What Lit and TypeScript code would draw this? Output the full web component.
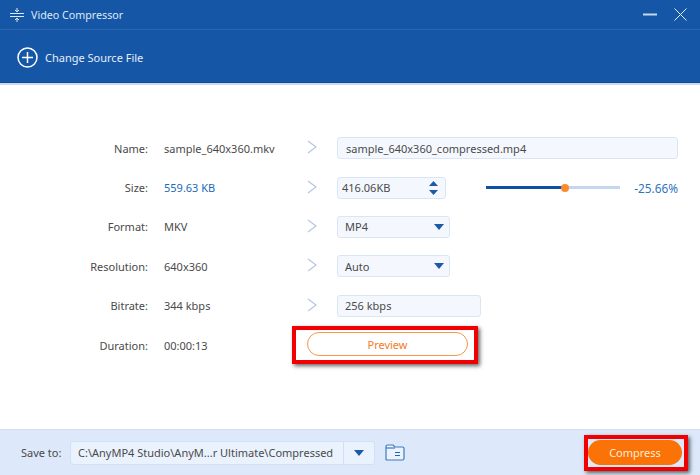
import { LitElement, html, css } from "lit";
import { customElement } from "lit/decorators.js";

const chevron = html`<svg class="chev" width="10" height="14" viewBox="0 0 10 14"><path d="M1 1 L9 7 L1 13" fill="none" stroke="#b5c8e2" stroke-width="1.2"/></svg>`;
const caret = html`<svg width="10" height="6" viewBox="0 0 10 6"><path d="M0 0H10L5 6Z" fill="#1a5aa8"/></svg>`;

@customElement("app-root")
export class AppRoot extends LitElement {
  static styles = css`
    :host { display: block; width: 700px; height: 475px; font-family: "Noto Sans", Tahoma, sans-serif; font-size: 11px; color: #4a4a4a; position: relative; overflow: hidden; background: #fff; }
    .title { height: 30px; box-sizing: border-box; background: #1557a6; border-bottom: 1px solid #2a67b0; display: flex; align-items: center; padding: 0 0 0 10px; color: #dfe9f6; font-size: 10.7px; }
    .title .logo { margin-right: 7px; }
    .title .name { flex: 1; }
    .title .ctl { display: flex; align-items: center; gap: 17px; margin-right: 13px; }
    .tool { height: 55px; box-sizing: border-box; background: #1557a6; border-bottom: 2px solid #c6daf3; box-shadow: inset 0 -1px 0 #0f4a94; display: flex; align-items: center; padding: 2px 0 0 17px; gap: 7px; color: #e6eef9; font-size: 11px; }
    .main { height: 344px; box-sizing: border-box; padding-top: 43.5px; display: grid; grid-template-columns: 148px 142px 47px 1fr; grid-auto-rows: 39.4px; align-items: center; }
    .label { text-align: right; }
    .val { padding-left: 16px; }
    .blue { color: #1d68b8; }
    .arrow { padding: 0 0 2px 17px; display: flex; }
    .box { box-sizing: border-box; height: 22px; background: #f4f8fe; border: 1px solid #dbe6f5; border-radius: 3px; display: flex; align-items: center; }
    .namebox { width: 341px; padding-left: 8px; }
    .sizerow { display: flex; align-items: center; }
    .sizebox { width: 109px; padding: 0 7px 0 4px; justify-content: space-between; }
    .spin { display: flex; flex-direction: column; gap: 4px; }
    .sel { width: 113px; padding: 0 5px 0 7px; justify-content: space-between; }
    .ratebox { width: 144px; padding-left: 7px; }
    .slider { margin-left: 40px; width: 134px; height: 3px; background: #c3d8f0; position: relative; }
    .fill { height: 3px; width: 79px; background: #0f50a5; }
    .knob { position: absolute; left: 75px; top: -2.5px; width: 8px; height: 8px; border-radius: 50%; background: #ff8a2b; }
    .pct { margin-left: 13px; width: 45px; text-align: right; color: #2f74c4; white-space: nowrap; font-size: 11.8px; }
    .prevcell { grid-column: 3 / 5; padding: 0 0 2px 17px; }
    .preview { box-sizing: border-box; width: 161px; height: 24px; border: 1px solid #f6964a; border-radius: 12px; color: #f47a1f; display: flex; align-items: center; justify-content: center; background: #fff; }
    .foot { height: 46px; box-sizing: border-box; background: #dde9fb; border-top: 1px solid #d2e0f3; display: flex; align-items: center; padding: 0 18px 0 21px; }
    .save { width: 49px; }
    .path { box-sizing: border-box; width: 305px; height: 24px; background: #eaf2fd; border: 1px solid #d0e0f6; border-radius: 3px; display: flex; align-items: center; }
    .ptext { flex: 1; padding-left: 7px; white-space: nowrap; }
    .pbtn { width: 30px; align-self: stretch; border-left: 1px solid #d0e0f6; display: flex; align-items: center; justify-content: center; }
    .folder { margin-left: 10px; flex: 1; display: flex; }
    .compress { box-sizing: border-box; width: 94px; height: 25px; border-radius: 13px; background: #fb7206; color: #fdeedd; display: flex; align-items: center; justify-content: center; }
    .mark { position: absolute; box-sizing: border-box; border: 4px solid #f00000; box-shadow: 2px 2px 4px rgba(0,0,0,.6); pointer-events: none; }
    .m1 { left: 292px; top: 326px; width: 186px; height: 38px; }
    .m2 { left: 584px; top: 435px; width: 104px; height: 36px; }
  `;

  render() {
    return html`
      <div class="title">
        <svg class="logo" width="14" height="14" viewBox="0 0 14 14" fill="none" stroke="#dfe9f6" stroke-width="1"><path d="M0 5.5H14M0 8.5H14M7 0V3.5M5 2L7 3.8L9 2M7 14V10.5M5 12L7 10.2L9 12"/></svg>
        <span class="name">Video Compressor</span>
        <div class="ctl">
          <svg width="14" height="3" viewBox="0 0 14 3"><rect width="14" height="2" y=".5" fill="#c5d8f0"/></svg>
          <svg width="13" height="13" viewBox="0 0 13 13" stroke="#e4edf8" stroke-width="1"><path d="M.5 .5L12.5 12.5M12.5 .5L.5 12.5"/></svg>
        </div>
      </div>
      <div class="tool">
        <svg width="21" height="21" viewBox="0 0 21 21" fill="none" stroke="#fff" stroke-width="1.5"><circle cx="10.5" cy="10.5" r="9.5"/><path d="M10.5 5V16M5 10.5H16"/></svg>
        <span>Change Source File</span>
      </div>
      <div class="main">
        <div class="label">Name:</div><div class="val">sample_640x360.mkv</div><div class="arrow">${chevron}</div>
        <div class="box namebox">sample_640x360_compressed.mp4</div>

        <div class="label">Size:</div><div class="val blue">559.63 KB</div><div class="arrow">${chevron}</div>
        <div class="sizerow">
          <div class="box sizebox"><span>416.06KB</span>
            <span class="spin">
              <svg width="9" height="5" viewBox="0 0 9 5" style="display:block"><path d="M0 5H9L4.5 0Z" fill="#1a5aa8"/></svg>
              <svg width="9" height="5" viewBox="0 0 9 5" style="display:block"><path d="M0 0H9L4.5 5Z" fill="#1a5aa8"/></svg>
            </span>
          </div>
          <div class="slider"><div class="fill"></div><div class="knob"></div></div>
          <div class="pct">-25.66%</div>
        </div>

        <div class="label">Format:</div><div class="val">MKV</div><div class="arrow">${chevron}</div>
        <div class="box sel"><span>MP4</span>${caret}</div>

        <div class="label">Resolution:</div><div class="val">640x360</div><div class="arrow">${chevron}</div>
        <div class="box sel"><span>Auto</span>${caret}</div>

        <div class="label">Bitrate:</div><div class="val">344 kbps</div><div class="arrow">${chevron}</div>
        <div class="box ratebox">256 kbps</div>

        <div class="label">Duration:</div><div class="val">00:00:13</div>
        <div class="prevcell"><div class="preview">Preview</div></div>
      </div>
      <div class="foot">
        <span class="save">Save to:</span>
        <div class="path">
          <span class="ptext">C:\\AnyMP4 Studio\\AnyM...r Ultimate\\Compressed</span>
          <span class="pbtn">${caret}</span>
        </div>
        <div class="folder">
          <svg width="20" height="17" viewBox="0 0 20 17" fill="none" stroke="#3f79bd" stroke-width="1.2"><path d="M1 15V2.5Q1 1 2.5 1H8L10 3H17.5Q19 3 19 4.5V14.5Q19 16 17.5 16H2Q1 16 1 15Z" fill="#eaf2fd"/><path d="M1 4H10"/><path d="M10 8.5H15M10 11.5H15" stroke="#2a66ad"/></svg>
        </div>
        <div class="compress">Compress</div>
      </div>
      <div class="mark m1"></div>
      <div class="mark m2"></div>
    `;
  }
}
